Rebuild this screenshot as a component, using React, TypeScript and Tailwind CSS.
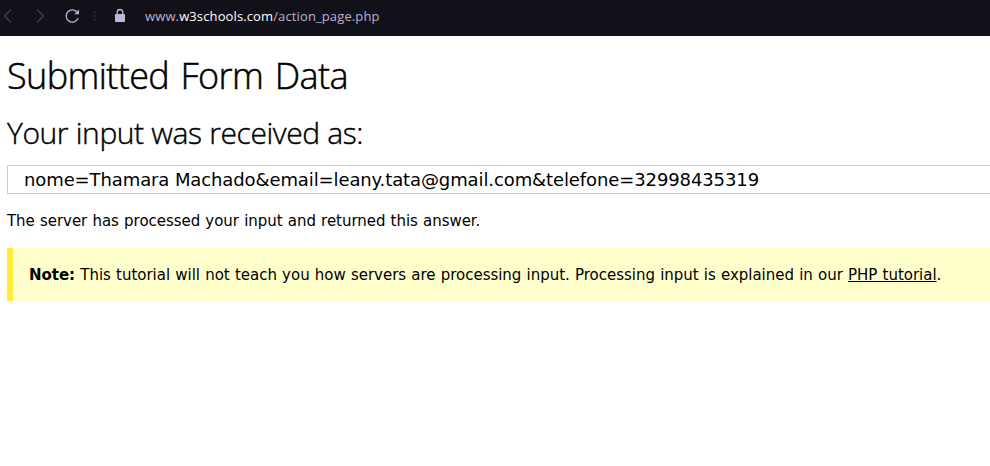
export default function App() {
  return (
    <div className="h-[466px] w-[990px] overflow-hidden bg-white text-black">
      <header className="flex h-9 items-center bg-[#121019] text-[#b9b1d3]">
        <svg className="h-9 w-[130px] shrink-0" viewBox="0 0 130 36" fill="none">
          <path d="M11 9.500L4.500 16L11 22.500" stroke="#4b4854" strokeWidth="1.100" />
          <path d="M37 9.500L43.500 16L37 22.500" stroke="#4b4854" strokeWidth="1.100" />
          <path d="M77.300 12.500A6.100 6.100 0 1 0 78 18.200" stroke="#b9b1d3" strokeWidth="1.300" />
          <path d="M79 9.500V14.200H74.300Z" fill="#b9b1d3" />
          <path d="M95 11v2M95 15v2M95 19v2" stroke="#292631" strokeWidth="2" />
          <rect x="115" y="14" width="10" height="8" rx="0.800" fill="#c0b7da" />
          <path d="M117.200 14.500v-2.200a2.800 2.800 0 0 1 5.600 0v2.200" stroke="#c0b7da" strokeWidth="1.300" />
        </svg>
        <div className="ml-[15px] pb-[3px] font-['Open_Sans',sans-serif] text-[13px] tracking-[0.12px] whitespace-nowrap">
          www.<span className="text-white">w3schools.com</span>/action_page.php
        </div>
      </header>
      <main className="pl-[7px] font-['DejaVu_Sans',sans-serif]">
        <h1 className="pt-[13px] font-['Open_Sans',sans-serif] text-[36px] leading-[54px] font-light tracking-[-0.6px] [word-spacing:2.7px] [-webkit-text-stroke:0.5px_black] whitespace-nowrap">Submitted Form Data</h1>
        <h2 className="mt-[7px] font-['Open_Sans',sans-serif] text-[30px] leading-[45px] font-light tracking-[-0.43px] [word-spacing:0.3px] [-webkit-text-stroke:0.4px_black] whitespace-nowrap">Your input was received as:</h2>
        <div className="mt-[10px] flex h-[29px] items-center border border-r-0 border-[#ccc] pl-4 text-[18px] tracking-[-0.105px] whitespace-nowrap">
          nome=Thamara Machado&amp;email=leany.tata@gmail.com&amp;telefone=32998435319
        </div>
        <p className="mt-[16px] text-[15px] leading-[23px] tracking-[-0.04px] [word-spacing:0.5px] whitespace-nowrap">The server has processed your input and returned this answer.</p>
        <div className="mt-[15px] flex h-[53px] items-center border-l-[6px] border-[#ffeb3b] bg-[#ffffcc] pt-[2px] pl-4 text-[15px] tracking-[-0.025px] [word-spacing:0.5px] whitespace-pre">
          <b>Note:</b> This tutorial will not teach you how servers are processing input. Processing input is explained in our <a className="underline">PHP tutorial</a>.
        </div>
      </main>
    </div>
  );
}
